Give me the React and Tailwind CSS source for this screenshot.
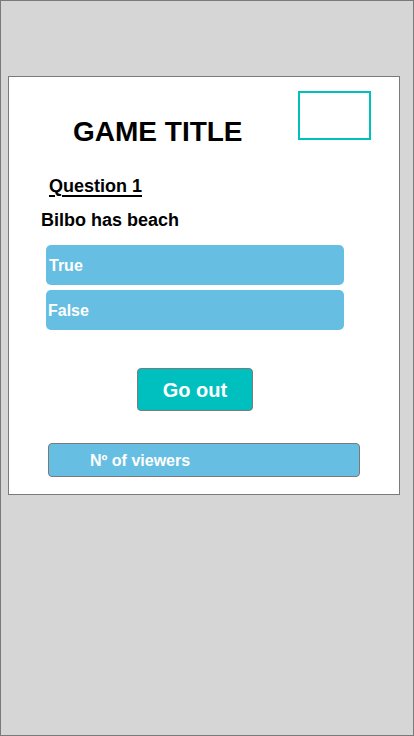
export default function App() {
  return (
    <div
      className="w-[414px] h-[736px] border border-[#7a7a7a] bg-[#d6d6d6] text-black"
      style={{ fontFamily: '"Liberation Sans", Arial, sans-serif' }}
    >
      <div className="ml-[7px] mt-[75px] w-[392px] h-[419px] border border-[#7a7a7a] bg-white flex flex-col">
        <div className="flex items-start pt-[14px] pl-[64px]">
          <div className="mt-[25px] h-[32px] leading-[32px] text-[28px] font-bold whitespace-nowrap">
            GAME TITLE
          </div>
          <div className="ml-auto mr-[28px] w-[73px] h-[49px] border-2 border-[#00bfbf]" />
        </div>
        <div className="mt-[27px] pl-[40px] h-[22px] leading-[22px] text-[18px] font-bold">
          <span className="underline decoration-2 underline-offset-[3px]">Question 1</span>
        </div>
        <div className="mt-[12px] pl-[32px] h-[22px] leading-[22px] text-[18px] font-bold">
          Bilbo has beach
        </div>
        <div className="mt-[14px] ml-[37px] w-[298px] h-[40px] rounded-[5px] bg-[#66bee2] flex items-center pl-[3px] pt-[2px] text-white font-bold text-[16px]">
          True
        </div>
        <div className="mt-[5px] ml-[37px] w-[298px] h-[40px] rounded-[5px] bg-[#66bee2] flex items-center pl-[2px] pt-[2px] text-white font-bold text-[16px]">
          False
        </div>
        <div className="mt-[38px] ml-[128px] w-[116px] h-[43px] rounded-[4px] border border-[#7a7a7a] bg-[#00bfbf] flex items-center justify-center text-white font-bold text-[20px]">
          Go out
        </div>
        <div className="mt-[32px] ml-[39px] w-[312px] h-[34px] rounded-[4px] border border-[#7a7a7a] bg-[#66bee2] flex items-center pl-[41px] pt-[2px] text-white font-bold text-[16px]">
          Nº of viewers
        </div>
      </div>
    </div>
  );
}
